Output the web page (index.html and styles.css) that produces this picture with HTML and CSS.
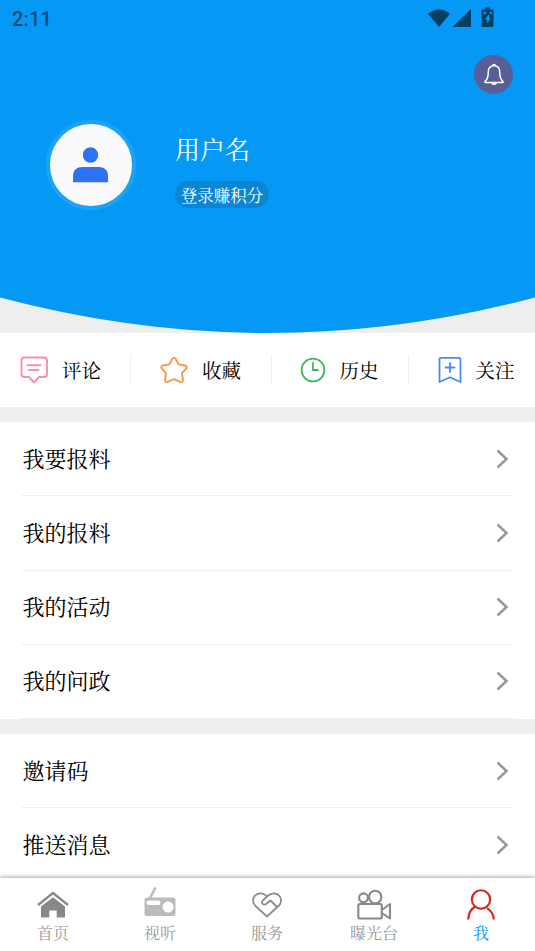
FILE: index.html
```html
<!DOCTYPE html>
<html lang="zh-CN">
<head>
<meta charset="utf-8">
<title>我</title>
<link rel="stylesheet" href="styles.css">
</head>
<body>
<div class="app">
  <header class="hero">
    <svg class="hero-bg" viewBox="0 0 535 333" preserveAspectRatio="none"><path d="M0 0H535V297.500Q267.500 368.500 0 297.500Z" fill="#0599f5"/></svg>
    <div class="status">
      <span class="time">2:11</span>
      <svg class="status-icons" width="68" height="22" viewBox="0 0 68 22" fill="#034066">
        <path d="M0 4.800Q11 -3.800 22 4.800L11 18Z"/>
        <path d="M24.500 18H43V0Z"/>
        <path fill-rule="evenodd" d="M57 -1.500H62V.5H64.500Q65.500 .5 65.500 1.500V17Q65.500 18 64.500 18H54.500Q53.500 18 53.500 17V1.500Q53.500 .5 54.500 .5H57ZM61 5L57 10.800H59.200V14.500L62.500 9H61ZM55.500 3V4.800H58.500V3ZM61.500 3V4.800H64V3Z"/>
      </svg>
    </div>
    <div class="bell">
      <svg width="22" height="24" viewBox="0 0 22 24" fill="none" stroke="#fff" stroke-width="1.500" stroke-linejoin="round">
        <path d="M11 2.700C7 2.700 5.300 5.800 5.300 9C5.300 14 4.500 16.500 2 18.500V19.500H20V18.500C17.500 16.500 16.700 14 16.700 9C16.700 5.800 15 2.700 11 2.700Z"/>
        <path d="M9.500 2.200Q11 .8 12.500 2.200M9 20.500Q11 22.300 13 20.500Z" fill="#fff"/>
      </svg>
    </div>
    <div class="profile">
      <div class="avatar">
        <svg width="36" height="36" viewBox="0 0 36 36" fill="#2d72f5"><circle cx="17.500" cy="8" r="7.700"/><path d="M0 35.300V29C0 23 4 20 9.500 20H25.500C31 20 35 23 35 29V35.300Z"/></svg>
      </div>
      <div class="who">
        <div class="name">用户名</div>
        <div class="pill">登录赚积分</div>
      </div>
    </div>
  </header>

  <nav class="quick">
    <a class="q q1"><svg width="28" height="28" viewBox="0 0 28 28" fill="none" stroke="#f78fb0" stroke-width="1.900" stroke-linecap="round" stroke-linejoin="round"><path d="M4.500 1.500H24Q27 1.500 27 4.500V18Q27 21 24 21H19L14 26.500L9 21H4.500Q1.500 21 1.500 18V4.500Q1.500 1.500 4.500 1.500Z"/><path d="M7.500 9.200H20.500M9 14H18.500"/></svg><span>评论</span></a>
    <a class="q q2"><svg width="28" height="28" viewBox="0 0 28 28" fill="none" stroke="#fb954d" stroke-width="1.900" stroke-linejoin="round"><path d="M12.300 3Q14 .8 15.700 3L18.600 8.400L25 9.500Q28 10.300 26 12.600L21.900 17.300L23 23.800Q23 26.600 20.400 25.800L14 23.200L7.600 25.800Q5 26.600 5 23.800L6.100 17.300L2 12.600Q0 10.300 3 9.500L9.400 8.400Z"/></svg><span>收藏</span></a>
    <a class="q q3"><svg width="26" height="26" viewBox="0 0 26 26" fill="none" stroke="#3bb95b" stroke-width="1.800" stroke-linecap="round"><circle cx="13" cy="13" r="11.400"/><path d="M13 6V13H18"/></svg><span>历史</span></a>
    <a class="q q4"><svg width="24" height="28" viewBox="0 0 24 28" fill="none" stroke="#478cf0" stroke-width="1.800" stroke-linejoin="round" stroke-linecap="round"><path d="M3 1.800H21Q22.500 1.800 22.500 3.300V26L12 21.300L1.500 26V3.300Q1.500 1.800 3 1.800Z"/><path d="M12 7V16M7.500 11.500H16.500"/></svg><span>关注</span></a>
  </nav>

  <main class="lists">
    <section class="list">
      <div class="row"><span>我要报料</span><svg class="chev" viewBox="0 0 12 20"><path d="M1.500 1.500L10.500 10L1.500 18.500"/></svg></div>
      <div class="row"><span>我的报料</span><svg class="chev" viewBox="0 0 12 20"><path d="M1.500 1.500L10.500 10L1.500 18.500"/></svg></div>
      <div class="row"><span>我的活动</span><svg class="chev" viewBox="0 0 12 20"><path d="M1.500 1.500L10.500 10L1.500 18.500"/></svg></div>
      <div class="row"><span>我的问政</span><svg class="chev" viewBox="0 0 12 20"><path d="M1.500 1.500L10.500 10L1.500 18.500"/></svg></div>
    </section>
    <section class="list">
      <div class="row"><span>邀请码</span><svg class="chev" viewBox="0 0 12 20"><path d="M1.500 1.500L10.500 10L1.500 18.500"/></svg></div>
      <div class="row"><span>推送消息</span><svg class="chev" viewBox="0 0 12 20"><path d="M1.500 1.500L10.500 10L1.500 18.500"/></svg></div>
    </section>
  </main>

  <footer class="tabs">
    <a class="tab"><svg width="36" height="36" viewBox="0 0 36 36"><path d="M3 19L18 7L33 19" fill="none" stroke="#888" stroke-width="2.300"/><path d="M18 11.200L30 20.500V31.500H21.700V24.500H14.300V31.500H6V20.500Z" fill="#888"/></svg><span>首页</span></a>
    <a class="tab"><svg width="36" height="36" viewBox="0 0 36 36"><path d="M8 12L13 2.500" stroke="#bbb" stroke-width="2.600" stroke-linecap="round"/><rect x="2.500" y="11.500" width="31" height="18.500" rx="2.500" fill="#bbb"/><rect x="4.500" y="14.500" width="14" height="4.500" rx="2.200" fill="#fff"/><circle cx="26" cy="21" r="5.500" fill="#fff"/></svg><span>视听</span></a>
    <a class="tab"><svg width="36" height="36" viewBox="0 0 36 36" fill="none" stroke="#8c8c8c" stroke-width="1.800" stroke-linejoin="round" stroke-linecap="round"><path d="M18 10.500C14.500 6 8 6.500 5.300 10.500C3.200 14 4 17 6 19.500L18 30.500L30 19.500C32.500 17 32.700 13 30.700 10.300C27.500 6 21.800 6.700 18.500 10L13.500 14.800C12 16.800 14.500 19.800 17 18L21.500 14.500L27.500 20.500"/></svg><span>服务</span></a>
    <a class="tab"><svg width="36" height="36" viewBox="0 0 36 36" fill="none" stroke="#888" stroke-width="2.100" stroke-linejoin="round"><circle cx="7.500" cy="11.800" r="4.400"/><circle cx="19.200" cy="11" r="6.200"/><rect x="2.300" y="18" width="23.500" height="14.500" rx="1.500"/><path d="M26.500 23.500L34 18V32.500L26.500 27.500"/></svg><span>曝光台</span></a>
    <a class="tab active"><svg width="36" height="36" viewBox="0 0 36 36" fill="none" stroke="#dc2412" stroke-width="2.100"><circle cx="18" cy="13.500" r="9.200"/><path d="M5.200 33.500C5.500 27.500 8.500 22.500 12.500 20.500M30.800 33.500C30.500 28.500 28 24.500 24 22.200"/></svg><span>我</span></a>
  </footer>
</div>
</body>
</html>
```
FILE: styles.css
```css
* { box-sizing: border-box; }
body {
  margin: 0;
  background: #eee;
  color: #000;
  font-family: "Noto Serif CJK SC", "Noto Serif SC", "Source Han Serif SC", "Liberation Serif", "Noto Sans CJK SC", serif;
}
svg { display: block; flex: none; overflow: visible; }
.app { height: 951px; overflow: hidden; display: flex; flex-direction: column; }

.hero { position: relative; height: 333px; flex: none; }
.hero-bg { position: absolute; inset: 0; width: 100%; height: 100%; z-index: -1; }
.status {
  display: flex;
  justify-content: space-between;
  padding: 9px 39px 0 12px;
  height: 55px;
}
.time { font: 500 20px/20px Roboto, sans-serif; letter-spacing: .2px; color: #034b78; }
.bell {
  width: 39px;
  height: 39px;
  margin: 0 22px 0 auto;
  border-radius: 50%;
  background: #585f98;
  display: grid;
  place-items: center;
}
.profile { display: flex; align-items: flex-start; padding: 26px 0 0 46px; }
.avatar {
  width: 90px;
  height: 90px;
  border: 4px solid #1da3f6;
  border-radius: 50%;
  background: #fafafd;
  display: grid;
  place-items: center;
}
.who { padding: 10px 0 0 39px; color: #fff; }
.name { font-size: 25px; line-height: 37px; }
.pill {
  margin-top: 14px;
  width: 94px;
  height: 27px;
  border-radius: 14px;
  background: #0a86d5;
  font-size: 16.500px;
  line-height: 28px;
  text-align: center;
  white-space: nowrap;
}

.quick { height: 74px; flex: none; background: #fff; display: flex; align-items: center; }
.q { height: 30px; display: flex; align-items: center; font-size: 19.500px; line-height: 30px; border-left: 1px solid #eee; white-space: nowrap; }
.q1 { width: 130px; padding-left: 20px; gap: 14px; border-left: 0; }
.q2 { width: 141px; padding-left: 29px; gap: 14px; }
.q3 { width: 137px; padding-left: 28px; gap: 13.500px; }
.q4 { flex: 1; padding-left: 28.500px; gap: 14px; }

.lists { flex: 1; min-height: 0; overflow: hidden; padding-top: 15px; }
.list { background: #fff; margin-bottom: 15px; padding: 0 22px; }
.row {
  height: 74.250px;
  display: flex;
  align-items: center;
  justify-content: space-between;
  padding: 0 5.500px 0 .5px;
  border-bottom: 1.500px solid #eee;
  font-size: 22px;
  line-height: 32px;
}
.row span { padding-bottom: 2px; }
.chev { width: 12px; height: 20px; fill: none; stroke: #999; stroke-width: 2.600; }

.tabs {
  position: relative;
  height: 73px;
  flex: none;
  display: flex;
  background: #fff;
  box-shadow: 0 -1px 4px rgba(0, 0, 0, .35);
}
.tab { flex: 1; display: flex; flex-direction: column; align-items: center; padding: 8px 1px 0 0; color: #999; font-size: 16px; line-height: 22px; }
.active { color: #0599f5; }
```
